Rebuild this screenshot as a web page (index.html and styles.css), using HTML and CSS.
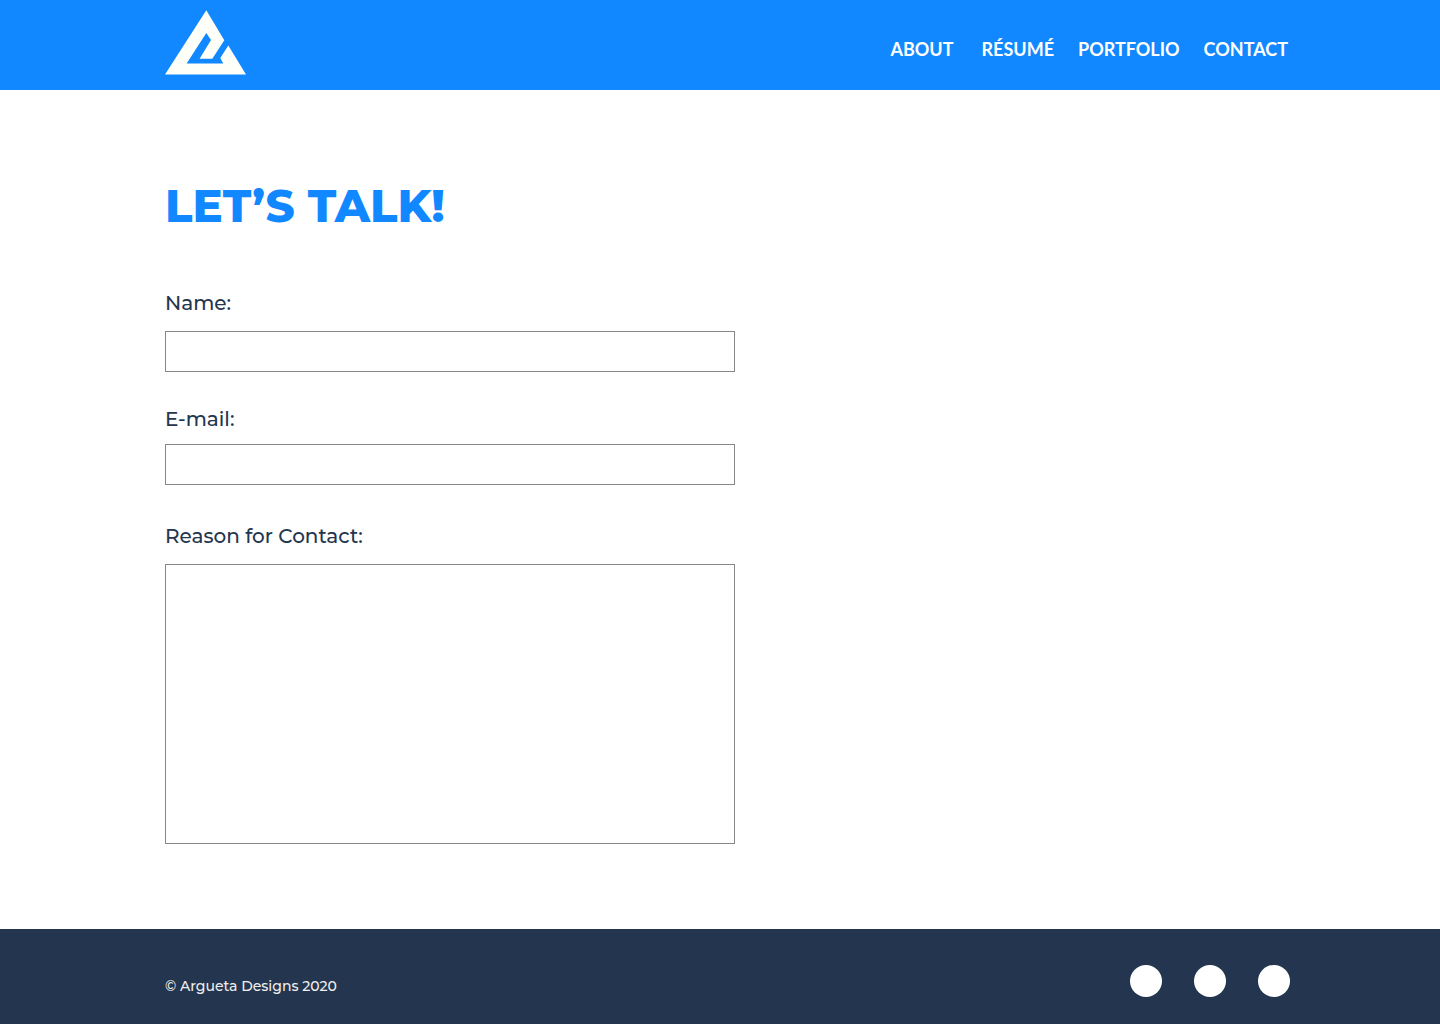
FILE: index.html
```html
<!DOCTYPE html>
<html lang="en">
<head>
<meta charset="utf-8">
<meta name="viewport" content="width=device-width, initial-scale=1">
<title>Contact – Argueta Designs</title>
<link rel="stylesheet" href="styles.css">
</head>
<body>
<header class="site-header">
  <a class="logo" href="#" aria-label="Argueta Designs">
    <svg class="logo-mark" viewBox="0 0 81 65" aria-hidden="true">
      <path fill="#fffffa" d="M41.3.3 59.3 30.3 47.3 48.7H34.6L46 30 41.3 23 21.6 53.4H58.3L55.3 48 63.3 35.5 81 64.6H0Z"/>
    </svg>
  </a>
  <nav class="site-nav">
    <a class="nav-link nav-link-first" href="#">ABOUT</a>
    <a class="nav-link" href="#">RÉSUMÉ</a>
    <a class="nav-link" href="#">PORTFOLIO</a>
    <a class="nav-link" href="#">CONTACT</a>
  </nav>
</header>
<main class="content">
  <h1 class="title">LET’S TALK!</h1>
  <form class="contact-form">
    <div class="field">
      <label class="label" for="name">Name:</label>
      <input class="control" id="name" type="text">
    </div>
    <div class="field field-compact">
      <label class="label" for="email">E-mail:</label>
      <input class="control" id="email" type="email">
    </div>
    <div class="field">
      <label class="label" for="reason">Reason for Contact:</label>
      <textarea class="control control-tall" id="reason"></textarea>
    </div>
  </form>
</main>
<footer class="site-footer">
  <p class="copyright">© Argueta Designs 2020</p>
  <div class="social">
    <a class="social-link" href="#" aria-label="Social profile 1"></a>
    <a class="social-link" href="#" aria-label="Social profile 2"></a>
    <a class="social-link" href="#" aria-label="Social profile 3"></a>
  </div>
</footer>
</body>
</html>
```
FILE: styles.css
```css
* {
  box-sizing: border-box;
}

body {
  margin: 0;
  min-height: 100vh;
  display: flex;
  flex-direction: column;
  background: #fff;
  color: #24364f;
  font-family: Montserrat, Inter, sans-serif;
}

.site-header,
.content,
.site-footer {
  padding-left: 165px;
  padding-right: 150px;
}

.site-header {
  display: flex;
  justify-content: space-between;
  align-items: flex-start;
  min-height: 90px;
  padding-top: 10px;
  background: #1188ff;
}

.logo-mark {
  display: block;
  width: 81px;
  height: 65px;
}

.site-nav {
  display: flex;
  gap: 24px;
  padding: 27px 2px 0 0;
}

.nav-link {
  color: #fff;
  font: 700 18px/24px "Gill Sans", Lato, sans-serif;
  text-decoration: none;
}

.nav-link-first {
  margin-right: 4px;
}

.content {
  flex: 1;
  padding-top: 88px;
  padding-bottom: 84px;
}

.title {
  margin: 0 0 57px;
  color: #1188ff;
  font-size: 45px;
  font-weight: 800;
  line-height: 56px;
}

.contact-form {
  max-width: 570px;
}

.field {
  display: flex;
  flex-direction: column;
  gap: 16px;
  margin-bottom: 35px;
}

.field-compact {
  gap: 13px;
  margin-bottom: 39px;
}

.field:last-child {
  margin-bottom: 0;
}

.label {
  font-size: 20px;
  font-weight: 500;
  line-height: 24px;
}

.control {
  width: 100%;
  height: 41px;
  padding: 8px 12px;
  border: 1px solid #888;
  border-radius: 0;
  background: #fff;
  color: inherit;
  font: 500 16px/24px Montserrat, Inter, sans-serif;
}

.control-tall {
  display: block;
  height: 280px;
  resize: none;
}

.site-footer {
  display: flex;
  justify-content: space-between;
  align-items: center;
  min-height: 95px;
  padding-top: 9px;
  background: #24364f;
}

.copyright {
  margin: 0;
  padding-top: 10px;
  color: #eee;
  font-size: 14px;
  font-weight: 500;
  line-height: 20px;
}

.social {
  display: flex;
  gap: 32px;
}

.social-link {
  width: 32px;
  height: 32px;
  border-radius: 50%;
  background: #fff;
}
```
